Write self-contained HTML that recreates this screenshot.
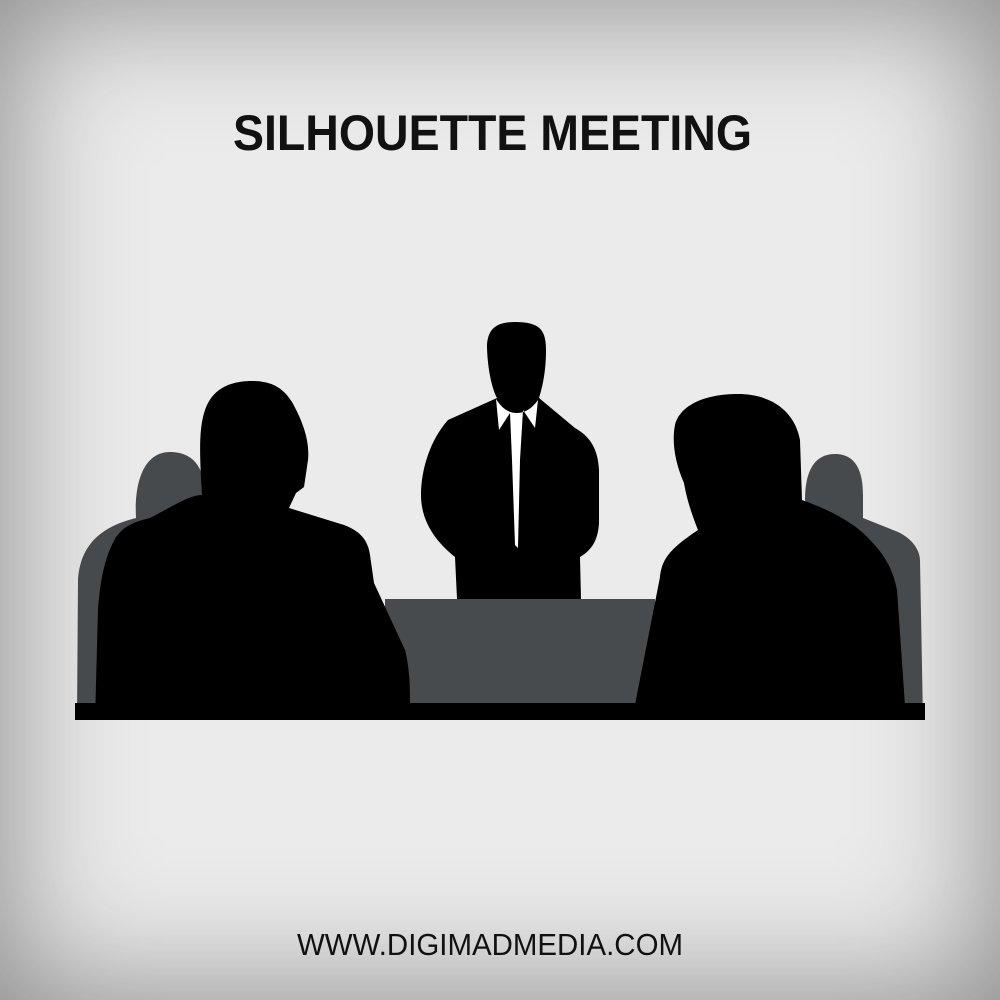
<!DOCTYPE html>
<html><head><meta charset="utf-8"><style>
html,body{margin:0;padding:0;}
body{width:1000px;height:1000px;overflow:hidden;background:#ebebeb;box-shadow:inset 0 0 140px 10px #8e8e8e;}
svg{position:absolute;left:0;top:0;}
</style></head><body>
<svg width="1000" height="1000" viewBox="0 0 1000 1000">
<text x="233" y="150" font-family="Liberation Sans, sans-serif" font-weight="bold" font-size="50" textLength="519" lengthAdjust="spacingAndGlyphs" fill="#111">SILHOUETTE MEETING</text>
<text x="297" y="955" font-family="Liberation Sans, sans-serif" font-size="31" textLength="386" lengthAdjust="spacingAndGlyphs" fill="#111">WWW.DIGIMADMEDIA.COM</text>
<path fill="#474a4d" d="M77,720 L78,580 C80,550 95,528 136,518 C134,480 145,452 170,452 C195,452 205,470 205,495 L205,720 Z"/>
<path fill="#474a4d" d="M805,500 C805,470 815,454 835,454 C858,454 863,475 863,495 L863,518 L898,532 C915,540 920,553 920,560 L923,720 L850,720 L820,540 Z"/>
<rect x="385" y="599" width="270" height="106" fill="#474b4e"/>
<rect x="75" y="703" width="850" height="17" fill="#000"/>
<path fill="#000" d="M497,398 C490,385 487,360 487,345 C488,330 495,322 515,322 C540,322 546,330 546,350 C546,370 543,385 539,398 L575,428 C591,437 598,450 599,470 L599,523 C598,540 592,550 580,557 L581,599 L457,599 L455,557 C440,545 421,525 421,495 C421,470 430,440 448,420 Z"/>
<path fill="#fff" d="M496,399 C503,410 510,413 517,413 C526,413 533,407 538,400 L535,428 L523,410 L520,460 L518,548 L515,545 L512,460 L510,413 L499,430 Z"/>
<path fill="#000" d="M202,495 C200,460 198,430 205,410 C212,390 228,381 252,381 C272,381 283,388 292,402 C302,420 310,440 308,460 L304,487 L296,493 L289,508 L344,525 C360,531 368,540 370,555 L374,583 L405,650 C410,670 410,690 410,703 L410,720 L95,720 L98,610 C100,580 105,560 111,547 C118,530 128,523 150,518 C175,505 190,495 202,495 Z"/>
<path fill="#000" d="M684,483 C674,460 672,440 675,425 C680,405 705,394 738,394 C772,394 795,412 800,440 L802,500 C830,510 855,523 870,540 C885,555 893,570 897,590 L906,720 L632,720 L660,577 C662,560 668,550 698,530 C690,510 686,495 684,483 Z"/>
</svg>
</body></html>
